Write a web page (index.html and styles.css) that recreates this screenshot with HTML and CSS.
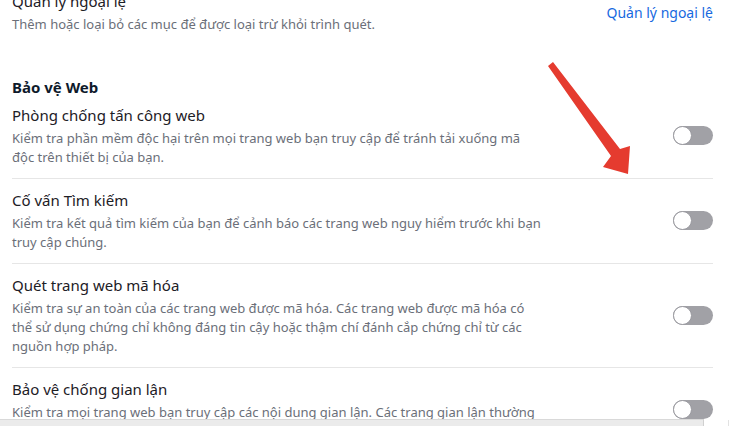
FILE: index.html
```html
<!DOCTYPE html>
<html lang="vi">
<head>
    <meta charset="UTF-8">
    <meta name="viewport" content="width=device-width, initial-scale=1.0">
    <title>Cài đặt bảo vệ</title>
    <link rel="stylesheet" href="styles.css">
</head>
<body>

    <div class="page">
        <!-- Exclusions row (scrolled partly out of view) -->
        <div class="row row-first">
            <div class="row-text">
                <div class="row-title">Quản lý ngoại lệ</div>
                <div class="row-desc">Thêm hoặc loại bỏ các mục để được loại trừ khỏi trình quét.</div>
            </div>
            <a href="#" class="link">Quản lý ngoại lệ</a>
        </div>

        <div class="section">
            <h2 class="section-title">Bảo vệ Web</h2>

            <div class="row">
                <div class="row-text">
                    <div class="row-title">Phòng chống tấn công web</div>
                    <div class="row-desc">Kiểm tra phần mềm độc hại trên mọi trang web bạn truy cập để tránh tải xuống mã<br>độc trên thiết bị của bạn.</div>
                </div>
                <label class="switch"><input type="checkbox"><span class="knob"></span></label>
            </div>

            <div class="row">
                <div class="row-text">
                    <div class="row-title">Cố vấn Tìm kiếm</div>
                    <div class="row-desc">Kiểm tra kết quả tìm kiếm của bạn để cảnh báo các trang web nguy hiểm trước khi bạn<br>truy cập chúng.</div>
                </div>
                <label class="switch"><input type="checkbox"><span class="knob"></span></label>
            </div>

            <div class="row">
                <div class="row-text">
                    <div class="row-title">Quét trang web mã hóa</div>
                    <div class="row-desc">Kiểm tra sự an toàn của các trang web được mã hóa. Các trang web được mã hóa có<br>thể sử dụng chứng chỉ không đáng tin cậy hoặc thậm chí đánh cắp chứng chỉ từ các<br>nguồn hợp pháp.</div>
                </div>
                <label class="switch"><input type="checkbox"><span class="knob"></span></label>
            </div>

            <div class="row">
                <div class="row-text">
                    <div class="row-title">Bảo vệ chống gian lận</div>
                    <div class="row-desc">Kiểm tra mọi trang web bạn truy cập các nội dung gian lận. Các trang gian lận thường<br>cố gắng đánh cắp thông tin cá nhân của bạn.</div>
                </div>
                <label class="switch"><input type="checkbox"><span class="knob"></span></label>
            </div>
        </div>
    </div>

    <!-- Red annotation arrow -->
    <svg class="arrow" width="736" height="426" viewBox="0 0 736 426">
        <polygon points="548,66 553,62 620,149 630,146 628,174 603,167 611,156" fill="#e53b2f"/>
    </svg>

    <!-- Window edge at the bottom -->
    <div class="frame-bottom"></div>
    <div class="frame-line"></div>

</body>
</html>
```

FILE: styles.css
```css
html, body {
    height: 100%;
}
body {
    margin: 0;
    background: #ffffff;
    font-family: "Noto Sans", "Open Sans", Arial, sans-serif;
    color: #1f2228;
    overflow: hidden;
}
.page {
    padding: 0 23px 0 12px;
    margin-top: -20px;
}
.row {
    display: flex;
    align-items: center;
    justify-content: space-between;
    padding: 10px 0 11px 0;
    border-top: 1px solid #e6e6e6;
}
.row-first {
    border-top: none;
    padding-bottom: 12px;
}
.section .row:first-of-type {
    border-top: none;
    padding-top: 7px;
}
.row-text {
    flex: 1;
}
.row-title {
    font-size: 15px;
    line-height: 22px;
    margin-bottom: 3px;
    color: #1d2026;
}
.row-desc {
    font-size: 13px;
    line-height: 19px;
    color: #6b6f79;
    white-space: nowrap;
}
.link {
    color: #1769e0;
    font-size: 14px;
    text-decoration: none;
    margin-top: 0;
}
.section {
    margin-top: 31px;
}
.section-title {
    font-size: 15px;
    font-weight: bold;
    line-height: 20px;
    margin: 0;
    color: #0e1a2b;
}
.switch {
    position: relative;
    display: inline-block;
    width: 40px;
    height: 19px;
    flex-shrink: 0;
}
.switch input {
    display: none;
}
.knob {
    position: absolute;
    inset: 0;
    background: #a1a1a6;
    border-radius: 10px;
}
.knob::before {
    content: "";
    position: absolute;
    left: 0;
    top: 0;
    width: 17px;
    height: 17px;
    border-radius: 50%;
    background: #ffffff;
    border: 1px solid #9a9aa0;
}
.arrow {
    position: fixed;
    left: 0;
    top: 0;
    pointer-events: none;
}
.frame-bottom {
    position: fixed;
    left: 0;
    bottom: 0;
    width: 703px;
    height: 6px;
    background: #ebebeb;
    border-top: 1px solid #d9d9d9;
    border-right: 1px solid #d0d0d0;
}
.frame-line {
    position: fixed;
    left: 728px;
    bottom: 0;
    width: 1px;
    height: 6px;
    background: #e2e2e2;
}
```
